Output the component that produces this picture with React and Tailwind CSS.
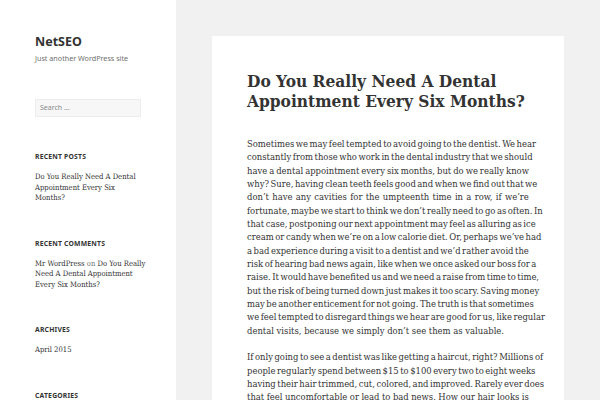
import React from "react";

const p1 = [
  "Sometimes we may feel tempted to avoid going to the dentist. We hear",
  "constantly from those who work in the dental industry that we should",
  "have a dental appointment every six months, but do we really know",
  "why? Sure, having clean teeth feels good and when we find out that we",
  "don\u2019t have any cavities for the umpteenth time in a row, if we\u2019re",
  "fortunate, maybe we start to think we don\u2019t really need to go as often. In",
  "that case, postponing our next appointment may feel as alluring as ice",
  "cream or candy when we\u2019re on a low calorie diet. Or, perhaps we\u2019ve had",
  "a bad experience during a visit to a dentist and we\u2019d rather avoid the",
  "risk of hearing bad news again, like when we once asked our boss for a",
  "raise. It would have benefited us and we need a raise from time to time,",
  "but the risk of being turned down just makes it too scary. Saving money",
  "may be another enticement for not going. The truth is that sometimes",
  "we feel tempted to disregard things we hear are good for us, like regular",
  "dental visits, because we simply don\u2019t see them as valuable.",
];

const p2 = [
  "If only going to see a dentist was like getting a haircut, right? Millions of",
  "people regularly spend between $15 to $100 every two to eight weeks",
  "having their hair trimmed, cut, colored, and improved. Rarely ever does",
  "that feel uncomfortable or lead to bad news. How our hair looks is",
  "important to us, and we want it to look its best for others to see.",
];

function Para({ lines }) {
  return (
    <p className="mb-[13.33px]">
      {lines.map((l, i) =>
        i === lines.length - 1 ? (
          <span key={i} className="block whitespace-nowrap">
            {l}
          </span>
        ) : (
          <span key={i} className="flex justify-between gap-[1.5px] whitespace-nowrap">
            {l.split(" ").map((w, j) => (
              <span key={j}>{w}</span>
            ))}
          </span>
        )
      )}
    </p>
  );
}

function Heading({ children }) {
  return (
    <h2 className="font-['Noto_Sans',sans-serif] font-bold text-[6.8px] leading-[10px] tracking-[0.03em] uppercase text-[#333] whitespace-nowrap">
      {children}
    </h2>
  );
}

export default function App() {
  const serif = "font-['DejaVu_Serif_Condensed','Liberation_Serif',serif]";
  const side = `${serif} text-[7.6px] leading-[10.5px] text-[#333] mt-[10px] whitespace-nowrap`;
  return (
    <div className="flex w-[600px] h-[400px] overflow-hidden bg-[#f1f1f1]">
      <aside className="w-[176px] shrink-0 bg-white pl-[35px] pr-[20px] pt-[34px]">
        <div className="font-['Noto_Sans',sans-serif] font-bold text-[12.5px] leading-[16px] text-[#333]">
          NetSEO
        </div>
        <div className="font-['Noto_Sans',sans-serif] text-[7.2px] leading-[10px] text-[#707070] mt-[3px] whitespace-nowrap">
          Just another WordPress site
        </div>
        <div className="mt-[36px] w-[106px] h-[18px] bg-[#f7f7f7] border border-[#ececec] flex items-center pl-[4px] font-['Noto_Sans',sans-serif] text-[7px] text-[#8a8a8a]">
          Search &hellip;
        </div>

        <div className="mt-[35px]">
          <Heading>Recent Posts</Heading>
          <div className={side}>
            Do You Really Need A Dental
            <br />
            Appointment Every Six
            <br />
            Months?
          </div>
        </div>

        <div className="mt-[35px]">
          <Heading>Recent Comments</Heading>
          <div className={side}>
            Mr WordPress <span className="text-[#777]">on</span> Do You Really
            <br />
            Need A Dental Appointment
            <br />
            Every Six Months?
          </div>
        </div>

        <div className="mt-[35px]">
          <Heading>Archives</Heading>
          <div className={side}>April 2015</div>
        </div>

        <div className="mt-[35px]">
          <Heading>Categories</Heading>
        </div>
      </aside>

      <main className="flex-1 pt-[36px] pl-[36px] pr-[36px]">
        <article className={`bg-white w-[352px] h-[400px] px-[35px] pt-[35px] ${serif} text-[#333]`}>
          <h1 className="font-bold text-[17.2px] leading-[20px] whitespace-nowrap">
            Do You Really Need A Dental
            <br />
            Appointment Every Six Months?
          </h1>
          <div className="mt-[26px] text-[9.4px] leading-[13.33px] w-[282px]">
            <Para lines={p1} />
            <Para lines={p2} />
          </div>
        </article>
      </main>
    </div>
  );
}
